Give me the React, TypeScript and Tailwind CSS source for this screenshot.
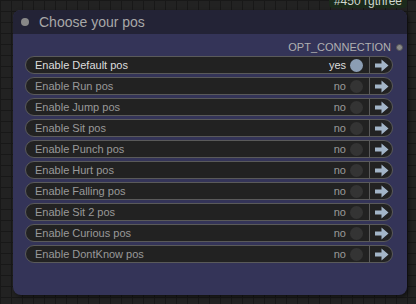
const rows = [
  { label: 'Enable Default pos', on: true },
  { label: 'Enable Run pos', on: false },
  { label: 'Enable Jump pos', on: false },
  { label: 'Enable Sit pos', on: false },
  { label: 'Enable Punch pos', on: false },
  { label: 'Enable Hurt pos', on: false },
  { label: 'Enable Falling pos', on: false },
  { label: 'Enable Sit 2 pos', on: false },
  { label: 'Enable Curious pos', on: false },
  { label: 'Enable DontKnow pos', on: false },
];

function Arrow() {
  return (
    <svg width="15" height="13" viewBox="0 0 15 13">
      <path d="M1 4.5 H7.5 V0.5 L14.5 6.5 L7.5 12.5 V8.5 H1 Z" fill="#a3b5c8" />
    </svg>
  );
}

function ToggleRow({ label, on }: { label: string; on: boolean }) {
  return (
    <div className="flex h-[18px] items-center rounded-full border border-[#5a5a5a] bg-[#222222] text-[11px]">
      <span className={`flex-1 pl-[9px] ${on ? 'text-[#dddddd]' : 'text-[#999999]'}`}>{label}</span>
      <span className={`${on ? 'text-[#dddddd]' : 'text-[#999999]'}`}>{on ? 'yes' : 'no'}</span>
      <span
        className={`ml-[4px] mr-[6px] h-[13px] w-[13px] rounded-full ${on ? 'bg-[#8b9db3]' : 'bg-[#343434]'}`}
      />
      <div className="flex h-full w-[23px] items-center justify-center border-l border-[#5a5a5a]">
        <Arrow />
      </div>
    </div>
  );
}

export default function App() {
  return (
    <div
      className="relative h-[304px] w-[416px] overflow-hidden bg-[#222222] bg-[linear-gradient(#181818_1px,transparent_1px),linear-gradient(90deg,#181818_1px,transparent_1px)] bg-[size:11px_11px] font-['Liberation_Sans',Arial,sans-serif]"
    >
      {/* rgthree badge */}
      <div className="absolute right-[9px] top-[-5px] rounded-b-[4px] bg-[#1b2a1b] px-[5px] text-[12px] leading-[13px] text-[#cfd8cf]">
        #450 rgthree
      </div>

      {/* Node */}
      <div className="ml-[13px] mt-[10px] flex h-[285px] w-[394px] flex-col overflow-hidden rounded-[8px] bg-[#343458] shadow-[2px_2px_4px_rgba(0,0,0,0.5)]">
        <div className="flex h-[24px] items-center bg-[#232336] pl-[8px]">
          <span className="h-[8px] w-[8px] rounded-full bg-[#888888]" />
          <span className="ml-[10px] text-[14px] text-[#a8a8a8]">Choose your pos</span>
        </div>
        <div className="flex flex-col px-[12px] pt-[6px]">
          <div className="-mr-[8px] flex h-[14px] items-center justify-end text-[11px] text-[#b0b0b0]">
            OPT_CONNECTION
            <span className="ml-[5px] h-[7px] w-[7px] rounded-full border border-[#555] bg-[#8a8a8a]" />
          </div>
          <div className="mt-[2px] flex flex-col gap-[3px] pr-[2px]">
            {rows.map((r) => (
              <ToggleRow key={r.label} label={r.label} on={r.on} />
            ))}
          </div>
        </div>
      </div>
    </div>
  );
}
